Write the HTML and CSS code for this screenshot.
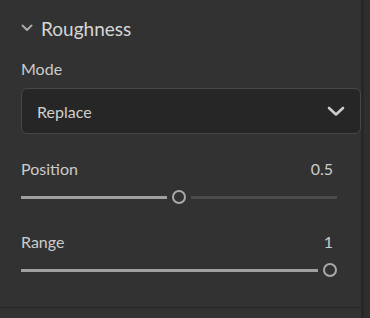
FILE: index.html
```html
<!DOCTYPE html>
<html>
<head>
<meta charset="utf-8">
<link rel="stylesheet" href="styles.css">
</head>
<body>
<div class="panel">
  <div class="content">
    <div class="section">
      <div class="header">
        <svg class="caret" width="12" height="8" viewBox="0 0 12 8"><path d="M1.5 1.5 L6 6 L10.5 1.5" fill="none" stroke="#a8a8a8" stroke-width="2" stroke-linecap="round" stroke-linejoin="round"/></svg>
        <span class="title">Roughness</span>
      </div>
      <div class="label mode-label">Mode</div>
      <div class="select">
        <span class="select-value">Replace</span>
        <svg class="select-caret" width="18" height="11" viewBox="0 0 18 11"><path d="M2 2 L9 8.5 L16 2" fill="none" stroke="#cdcdcd" stroke-width="2.6" stroke-linecap="round" stroke-linejoin="round"/></svg>
      </div>
      <div class="field">
        <div class="field-row">
          <span class="label">Position</span>
          <span class="value">0.5</span>
        </div>
        <div class="slider">
          <div class="fill" style="flex: 0.5"></div>
          <div class="handle"></div>
          <div class="rest" style="flex: 0.5"></div>
        </div>
      </div>
      <div class="field">
        <div class="field-row">
          <span class="label">Range</span>
          <span class="value">1</span>
        </div>
        <div class="slider">
          <div class="fill" style="flex: 1"></div>
          <div class="handle"></div>
        </div>
      </div>
    </div>
  </div>
  <div class="scrollbar"></div>
</div>
</body>
</html>
```
FILE: styles.css
```css
html, body {
  margin: 0;
  padding: 0;
  background: #323232;
}
body {
  font-family: Lato, "Open Sans", sans-serif;
  color: #cfcfcf;
}
.panel {
  display: flex;
  width: 370px;
  height: 318px;
}
.content {
  width: 361px;
}
.section {
  padding: 0 0 0 21px;
  height: 307px;
  border-bottom: 1px solid #262626;
  box-sizing: content-box;
}
.scrollbar {
  width: 6px;
  border-left: 3px solid #272727;
  background: #2e2e2e;
}
.header {
  display: flex;
  align-items: center;
  height: 28px;
  padding-top: 14px;
}
.caret {
  margin-right: 8px;
}
.title {
  font-size: 19px;
  color: #d6d6d6;
}
.label {
  font-size: 16px;
  color: #cbcbcb;
}
.mode-label {
  margin-top: 16px;
  line-height: 22px;
}
.select {
  margin-top: 8px;
  height: 44px;
  border: 1px solid #474747;
  border-radius: 6px;
  background: #262626;
  display: flex;
  align-items: center;
  justify-content: space-between;
  padding: 0 15px;
}
.select-value {
  font-size: 16px;
  color: #cfcfcf;
}
.field {
  margin-top: 24px;
  padding-right: 24px;
}
.field + .field {
  margin-top: 27px;
}
.field-row {
  display: flex;
  justify-content: space-between;
  line-height: 22px;
  padding-right: 4px;
}
.value {
  font-size: 16px;
  color: #cbcbcb;
}
.slider {
  display: flex;
  align-items: center;
  height: 14px;
  margin-top: 10px;
}
.fill {
  height: 3px;
  background: #a0a0a0;
  margin-right: 5px;
}
.rest {
  height: 3px;
  background: #4b4b4b;
  margin-left: 5px;
}
.handle {
  width: 10px;
  height: 10px;
  border: 2px solid #a8a8a8;
  border-radius: 50%;
  flex: none;
}
```
